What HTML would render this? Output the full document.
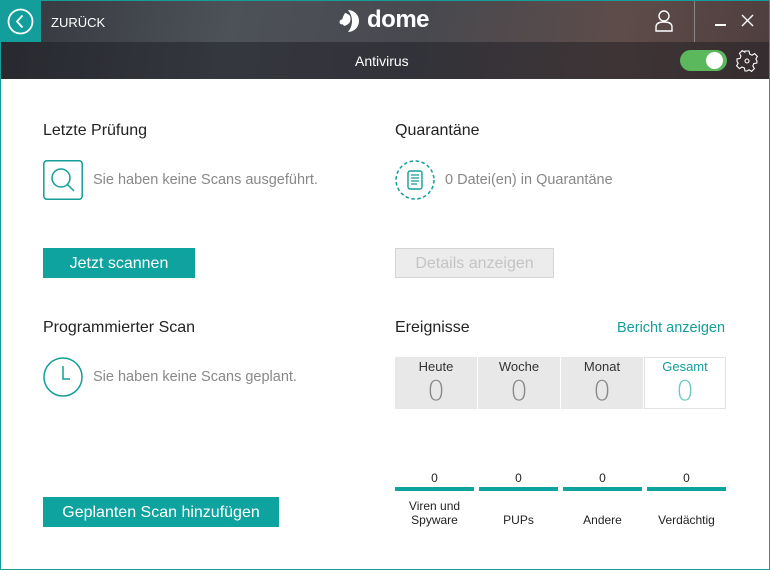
<!DOCTYPE html>
<html><head><meta charset="utf-8"><style>
*{margin:0;padding:0;box-sizing:border-box}
body{width:770px;height:570px;overflow:hidden;font-family:"Liberation Sans",sans-serif;background:#fff;position:relative}
.frame{position:absolute;inset:0;border:1px solid #139e9b;pointer-events:none;z-index:10}
.hdr{position:absolute;left:0;top:0;width:770px;height:79px;background:linear-gradient(100deg,#34373d 0%,#4d5158 30%,#48494f 55%,#5e4c4a 80%,#4e3e3d 100%)}
.sub{position:absolute;left:0;top:42px;width:770px;height:37px;background:rgba(25,25,30,.45)}
.back{position:absolute;left:0;top:0;width:41px;height:42px;background:#139e9b}
.abs{position:absolute}
.t{position:absolute;white-space:nowrap}
h3{position:absolute;font-size:16px;font-weight:normal;color:#222}
.g{color:#888;font-size:14.5px}
.btn{position:absolute;background:#0fa39f;color:#fff;font-size:16px;text-align:center}
.cell{position:absolute;top:357px;width:82px;height:52px;background:#e8e8e8;text-align:center;font-size:13px;color:#333;padding-top:2px}
.cell b{display:block;font-weight:normal;font-size:28px;color:#888;margin-top:0px;font-family:"DejaVu Sans",sans-serif;font-weight:200}
.bar{position:absolute;top:487px;width:79px;height:4px;background:#0fa39f}
.n{position:absolute;top:471px;width:79px;text-align:center;font-size:12px;color:#222}
.lb{position:absolute;width:79px;text-align:center;font-size:12px;color:#222;line-height:14px}
</style></head><body>
<div class="hdr"></div><div class="sub"></div>
<div class="back"></div>
<svg class="abs" style="left:7px;top:8px" width="27" height="27"><circle cx="13.5" cy="13.5" r="12" fill="none" stroke="#fff" stroke-width="1.8"/><path d="M15.5 7.5 L10 13.5 L15.5 19.5" fill="none" stroke="#fff" stroke-width="1.8"/></svg>
<div class="t" style="left:51px;top:15px;color:#fff;font-size:13px">ZURÜCK</div>
<svg class="abs" style="left:339px;top:9px" width="24" height="24" viewBox="0 0 24 24"><path d="M9 1 A11 11 0 1 1 9 23 Q13 18 13 12 Q13 6 9 1Z" fill="#fff"/><path d="M6 4 A9 9 0 0 1 11 7 Q12 10 11 13 Q9 16 5 17 Q1 12 6 4Z" fill="#fff"/><circle cx="3" cy="13" r="2.5" fill="#fff"/></svg>
<div class="t" style="left:367px;top:6px;color:#fff;font-size:24px;font-weight:bold;letter-spacing:-0.5px">dome</div>
<svg class="abs" style="left:654px;top:9px" width="20" height="24"><circle cx="10" cy="7" r="5" fill="none" stroke="#fff" stroke-width="1.4"/><path d="M2 22 V18 Q2 13 10 13 Q18 13 18 18 V22Z" fill="none" stroke="#fff" stroke-width="1.4"/></svg>
<div class="abs" style="left:694px;top:0;width:1px;height:42px;background:#888"></div>
<div class="abs" style="left:715px;top:24px;width:11px;height:1.5px;background:#fff"></div>
<svg class="abs" style="left:741px;top:14px" width="13" height="13"><path d="M1 1L12 12M12 1L1 12" stroke="#fff" stroke-width="1.4"/></svg>
<div class="t" style="left:355px;top:53px;color:#fff;font-size:14px">Antivirus</div>
<div class="abs" style="left:680px;top:50px;width:47px;height:21px;border-radius:11px;background:#5cb85c"></div>
<div class="abs" style="left:706px;top:52px;width:17px;height:17px;border-radius:50%;background:#fff"></div>
<svg class="abs" style="left:735px;top:49px" width="24" height="24" viewBox="0 0 24 24"><path d="M10 2h4l.6 3 2.4 1.2 2.6-1.6 2.8 2.8-1.6 2.6L22 12l-.2 2-3 .6-1 2.4 1.6 2.6-2.8 2.8-2.6-1.6-2 1.2L12 22h-2l-.6-3-2.4-1-2.6 1.6-2.8-2.8 1.6-2.6L2 12.4V10l3-.6 1-2.4-1.6-2.6 2.8-2.8 2.6 1.6L10 2z" fill="none" stroke="#fff" stroke-width="1.1"/><circle cx="12" cy="12" r="2" fill="none" stroke="#fff" stroke-width="1.1"/></svg>

<h3 style="left:43px;top:122px">Letzte Prüfung</h3>
<svg class="abs" style="left:43px;top:160px" width="40" height="40"><rect x="0.8" y="0.8" width="38.4" height="38.4" rx="3" fill="none" stroke="#139e9b" stroke-width="1.5"/><circle cx="18" cy="18" r="9" fill="none" stroke="#139e9b" stroke-width="1.5"/><path d="M24.5 24.5L31 31" stroke="#139e9b" stroke-width="1.5"/></svg>
<div class="t g" style="left:93px;top:172px">Sie haben keine Scans ausgeführt.</div>
<div class="btn" style="left:43px;top:248px;width:152px;height:30px;line-height:31px">Jetzt scannen</div>
<h3 style="left:43px;top:319px">Programmierter Scan</h3>
<svg class="abs" style="left:43px;top:357px" width="40" height="40"><circle cx="20" cy="20" r="19" fill="none" stroke="#139e9b" stroke-width="1.5"/><path d="M20 9V22H27" fill="none" stroke="#139e9b" stroke-width="1.5"/></svg>
<div class="t g" style="left:93px;top:369px">Sie haben keine Scans geplant.</div>
<div class="btn" style="left:43px;top:497px;width:236px;height:30px;line-height:31px">Geplanten Scan hinzufügen</div>

<h3 style="left:395px;top:122px">Quarantäne</h3>
<svg class="abs" style="left:395px;top:160px" width="40" height="40"><circle cx="20" cy="20" r="19" fill="none" stroke="#139e9b" stroke-width="1.5" stroke-dasharray="3.5 2.5"/><rect x="13" y="11" width="14" height="18" rx="2" fill="none" stroke="#139e9b" stroke-width="1.4"/><path d="M16 15h8M16 18h8M16 21h8M16 24h6" stroke="#139e9b" stroke-width="1.3"/></svg>
<div class="t g" style="left:445px;top:172px">0 Datei(en) in Quarantäne</div>
<div class="abs" style="left:395px;top:248px;width:159px;height:30px;background:#ececec;border:1px solid #d4d4d4;color:#c4c4c4;font-size:16px;text-align:center;line-height:30px">Details anzeigen</div>
<h3 style="left:395px;top:319px">Ereignisse</h3>
<div class="t" style="left:617px;top:320px;color:#139e9b;font-size:14.5px">Bericht anzeigen</div>
<div class="cell" style="left:395px">Heute<b>0</b></div>
<div class="cell" style="left:478px">Woche<b>0</b></div>
<div class="cell" style="left:561px">Monat<b>0</b></div>
<div class="cell" style="left:644px;background:#fff;border:1px solid #e2e2e2;color:#139e9b;padding-top:1px">Gesamt<b style="color:#6cc8c4">0</b></div>
<div class="n" style="left:395px">0</div><div class="n" style="left:479px">0</div><div class="n" style="left:563px">0</div><div class="n" style="left:647px">0</div>
<div class="bar" style="left:395px"></div><div class="bar" style="left:479px"></div><div class="bar" style="left:563px"></div><div class="bar" style="left:647px"></div>
<div class="lb" style="left:395px;top:499px">Viren und<br>Spyware</div>
<div class="lb" style="left:479px;top:513px">PUPs</div>
<div class="lb" style="left:563px;top:513px">Andere</div>
<div class="lb" style="left:647px;top:513px">Verdächtig</div>
<div class="frame"></div>
</body></html>
